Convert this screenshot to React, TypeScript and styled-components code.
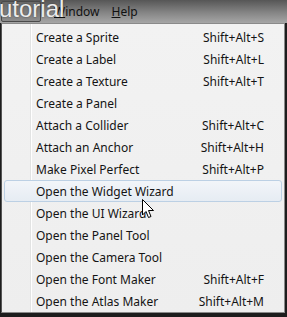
import styled, { createGlobalStyle } from 'styled-components'

const GlobalStyle = createGlobalStyle`
  body {
    margin: 0;
    background: #1c1c1c;
    overflow: hidden;
  }
`

const Screen = styled.div`
  position: relative;
  width: 287px;
  height: 317px;
  background: #1d1d1d;
  font-family: "Noto Sans", "Open Sans", sans-serif;
  font-size: 12px;
  color: #000;
  overflow: hidden;
`

const MenuBar = styled.div`
  display: flex;
  align-items: center;
  height: 23px;
  background: linear-gradient(#565656, #858585 55%, #a6a6a6);
  box-sizing: border-box;
`

const PressedTab = styled.div`
  width: 40px;
  height: 21px;
  margin-left: 1px;
  border: 1px solid #4a4a4a;
  border-radius: 2px;
  box-sizing: border-box;
  background: linear-gradient(#6a6a6a, #8c8c8c);
`

const BarItem = styled.span<{ gap?: number }>`
  margin-left: ${p => p.gap ?? 0}px;
  color: #111;
  u { text-decoration: underline; }
`

const Caption = styled.div`
  position: absolute;
  left: -1px;
  top: -5px;
  font-family: "Liberation Sans", sans-serif;
  font-size: 24px;
  color: #ececec;
  text-shadow: 0 0 2px rgba(0, 0, 0, 0.5);
`

const Dropdown = styled.div`
  margin-left: 1px;
  width: 284px;
  height: 290px;
  box-sizing: border-box;
  border: 1px solid #8a8a8a;
  border-left-color: #555;
  background:
    linear-gradient(to right, transparent 28px, #e2e3e3 28px, #e2e3e3 29px, #ffffff 29px, #ffffff 30px, transparent 30px),
    linear-gradient(#f2f2f2, #eeeeee);
  padding: 2px 2px 0 2px;
`

const Item = styled.div<{ active?: boolean }>`
  display: flex;
  align-items: center;
  justify-content: space-between;
  height: 22px;
  box-sizing: border-box;
  padding: 0 17px 0 31px;
  border: 1px solid ${p => (p.active ? '#bcd0e4' : 'transparent')};
  border-radius: 3px;
  background: ${p => (p.active ? 'linear-gradient(#f2f5f9, #e6ecf3)' : 'transparent')};
  color: #141414;
`

const Shortcut = styled.span`
  color: #141414;
`

const Cursor = styled.svg`
  position: absolute;
  left: 142px;
  top: 199px;
`

const items: [string, string][] = [
  ['Create a Sprite', 'Shift+Alt+S'],
  ['Create a Label', 'Shift+Alt+L'],
  ['Create a Texture', 'Shift+Alt+T'],
  ['Create a Panel', ''],
  ['Attach a Collider', 'Shift+Alt+C'],
  ['Attach an Anchor', 'Shift+Alt+H'],
  ['Make Pixel Perfect', 'Shift+Alt+P'],
  ['Open the Widget Wizard', ''],
  ['Open the UI Wizard', ''],
  ['Open the Panel Tool', ''],
  ['Open the Camera Tool', ''],
  ['Open the Font Maker', 'Shift+Alt+F'],
  ['Open the Atlas Maker', 'Shift+Alt+M'],
]

function App() {
  return (
    <>
      <GlobalStyle />
      <Screen>
        <MenuBar>
          <PressedTab />
          <BarItem gap={13}><u>W</u>indow</BarItem>
          <BarItem gap={12}><u>H</u>elp</BarItem>
        </MenuBar>
        <Dropdown>
          {items.map(([label, key], i) => (
            <Item key={label} active={i === 7}>
              <span>{label}</span>
              <Shortcut>{key}</Shortcut>
            </Item>
          ))}
        </Dropdown>
        <Caption>utorial</Caption>
        <Cursor width="13" height="20" viewBox="0 0 13 20">
          <path d="M0.5 0.5 L0.5 16 L4 12.5 L6.5 18.5 L9 17.5 L6.5 11.5 L11.5 11.5 Z" fill="#fff" stroke="#000" strokeWidth="1" strokeLinejoin="round" />
        </Cursor>
      </Screen>
    </>
  )
}
export default App
